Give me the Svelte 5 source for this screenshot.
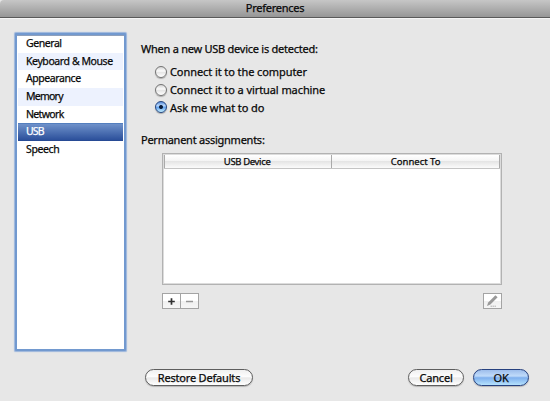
<script>
  const sections = [
    { name: 'General', ls: -0.44 },
    { name: 'Keyboard & Mouse', ls: -0.41 },
    { name: 'Appearance', ls: -0.42 },
    { name: 'Memory', ls: -0.75 },
    { name: 'Network', ls: -0.65 },
    { name: 'USB', ls: -0.9 },
    { name: 'Speech', ls: -0.38 }
  ];
  const choices = ['Connect it to the computer', 'Connect it to a virtual machine', 'Ask me what to do'];
  let section = $state('USB');
  let choice = $state(2);
</script>

<div class="window">
  <header><span>Preferences</span></header>
  <main>
    <nav>
      {#each sections as s}
        <button class="row" class:selected={section === s.name} onclick={() => (section = s.name)}><span style="letter-spacing: {s.ls}px">{s.name}</span></button>
      {/each}
    </nav>
    <section>
      <h2 class="detected"><span>When a new USB device is detected:</span></h2>
      <div class="radios">
        {#each choices as c, i}
          <button class="radio" onclick={() => (choice = i)}>
            <i class:on={choice === i}></i><span>{c}</span>
          </button>
        {/each}
      </div>
      <h2 class="permanent"><span>Permanent assignments:</span></h2>
      <div class="table">
        <div class="head">
          <div><span class="device">USB Device</span></div>
          <div><span>Connect To</span></div>
        </div>
      </div>
      <div class="tools">
        <div class="pair">
          <button aria-label="Add"><svg width="7" height="7" viewBox="0 0 7 7"><path d="M3.5 0.2v6.6M0.2 3.5h6.6" stroke="#303030" stroke-width="1.7" /></svg></button>
          <button aria-label="Remove"><svg width="7" height="7" viewBox="0 0 7 7"><path d="M0 3.5h7" stroke="#969696" stroke-width="1.5" /></svg></button>
        </div>
        <button aria-label="Edit"><svg width="13" height="12" viewBox="0 0 13 12"><path d="M1 11l1.2-3.6L9.4.3l2.2 2-7.2 7.2z" fill="#999" /><path d="M4.5 11.2H10" stroke="#b0b0b0" stroke-dasharray="1.5 .5" /></svg></button>
      </div>
    </section>
  </main>
  <footer>
    <button class="restore"><span>Restore Defaults</span></button>
    <button class="cancel"><span>Cancel</span></button>
    <button class="ok"><span>OK</span></button>
  </footer>
</div>

<style>
  :global(body) { margin: 0; background: #e7e7e7; }
  .window {
    width: 550px; height: 401px; box-sizing: border-box; overflow: hidden;
    display: flex; flex-direction: column; background: #e7e7e7; color: #080808;
    font: 400 11px/18px "Noto Sans", sans-serif;
    -webkit-text-stroke: 0.25px currentColor;
  }
  button { all: unset; box-sizing: border-box; cursor: default; white-space: nowrap; }
  span { display: inline-block; white-space: nowrap; }
  header {
    height: 18px; box-sizing: border-box; flex: none; text-align: center; line-height: 16px;
    background: linear-gradient(#c6c6c6, #969696); letter-spacing: -0.25px;
    border-bottom: 1px solid #595959; border-radius: 4px 0 0 0;
    box-shadow: 0 1px #f4f4f4;
  }
  main { display: flex; height: 336px; flex: none; padding: 15px 0 0 15px; box-sizing: border-box; }
  nav {
    width: 111px; height: 318px; box-sizing: border-box; flex: none; font-size: 10.5px;
    border: 2px solid #7299cf; background: #fff; padding: 0 1px; border-radius: 1px;
    box-shadow: 0 0 1px 0.5px #9bb5dc, inset 0 1px #8fa0bb;
  }
  .row { display: block; width: 100%; height: 17.67px; line-height: 17.67px; padding-left: 8px; }
  .row:nth-child(even) { background: #edf2fe; }
  .row.selected { background: linear-gradient(#4776b9 0, #6d90c9 8%, #2c509b 94%, #23468f); color: #fff; }
  section { width: 361px; margin-left: 15px; padding-top: 7px; }
  h2 { margin: 0; font: inherit; height: 18px; letter-spacing: -0.25px; }
  .detected { height: 23px; }
  .radios { padding-left: 14px; height: 68px; letter-spacing: -0.08px; }
  .radio { display: flex; align-items: center; height: 17.8px; }
  .radio i {
    width: 12px; height: 12px; box-sizing: border-box; border: 1px solid #737373; border-radius: 50%;
    margin-right: 3px; background: linear-gradient(#d5d5d5, #fbfbfb 40%, #e6e6e6 55%, #fff);
    box-shadow: 0 1px 1px #aaa;
  }
  .radio i.on {
    border-color: #24457f;
    background: radial-gradient(circle at 50% 50%, #071a38 1.5px, transparent 2.4px), linear-gradient(#5b8edb, #b5d6fc 35%, #6aa6ef 55%, #c4f0ff);
  }
  .table {
    margin-left: 21px; width: 340px; height: 132px; box-sizing: border-box; margin-top: 4px;
    border: 1px solid #b2b2b2; box-shadow: inset 0 0 0 1px #dcdcdc; background: #fff; padding: 1px;
  }
  .head { display: flex; height: 13px; border-bottom: 1px solid #c4c4c4; font-size: 9.5px; line-height: 13px; text-align: center; }
  .head div {
    flex: 1; border-left: 1px solid #aaa;
    background: linear-gradient(#fff, #f4f4f4 45%, #e5e5e5 50%, #fbfbfb);
  }
  .head div:first-child { padding-right: 2px; flex-grow: 0.985; }
  .device { letter-spacing: -0.35px; }
  .head div:last-child { border-right: 1px solid #aaa; }
  .tools { margin: 8px 0 0 21px; width: 340px; display: flex; justify-content: space-between; }
  .pair { display: flex; }
  .tools button {
    width: 19px; height: 16px; border: 1px solid #a4a4a4; display: flex; align-items: center; justify-content: center;
    background: linear-gradient(#fff 50%, #f0f0f0 50%, #f6f6f6);
  }
  .pair button + button { margin-left: -1px; }
  footer { display: flex; padding: 15px 21px 0 145px; letter-spacing: -0.18px; }
  footer button {
    height: 17px; border: 1px solid #5e5e5e; border-radius: 9px; text-align: center; line-height: 15px;
    background: linear-gradient(#f0f0f0, #fdfdfd 45%, #e9e9e9 52%, #fff);
    box-shadow: 0 1px 1px #b5b5b5; letter-spacing: -0.18px;
  }
  .restore { width: 108px; margin-right: auto; }
  .cancel { width: 56px; margin-right: 9px; }
  .ok { width: 56px; }
  footer .ok { border-color: #26417f; background: linear-gradient(#9dbdeb, #c0dbfa 40%, #7fb0ee 52%, #b5e2fd); }
</style>
